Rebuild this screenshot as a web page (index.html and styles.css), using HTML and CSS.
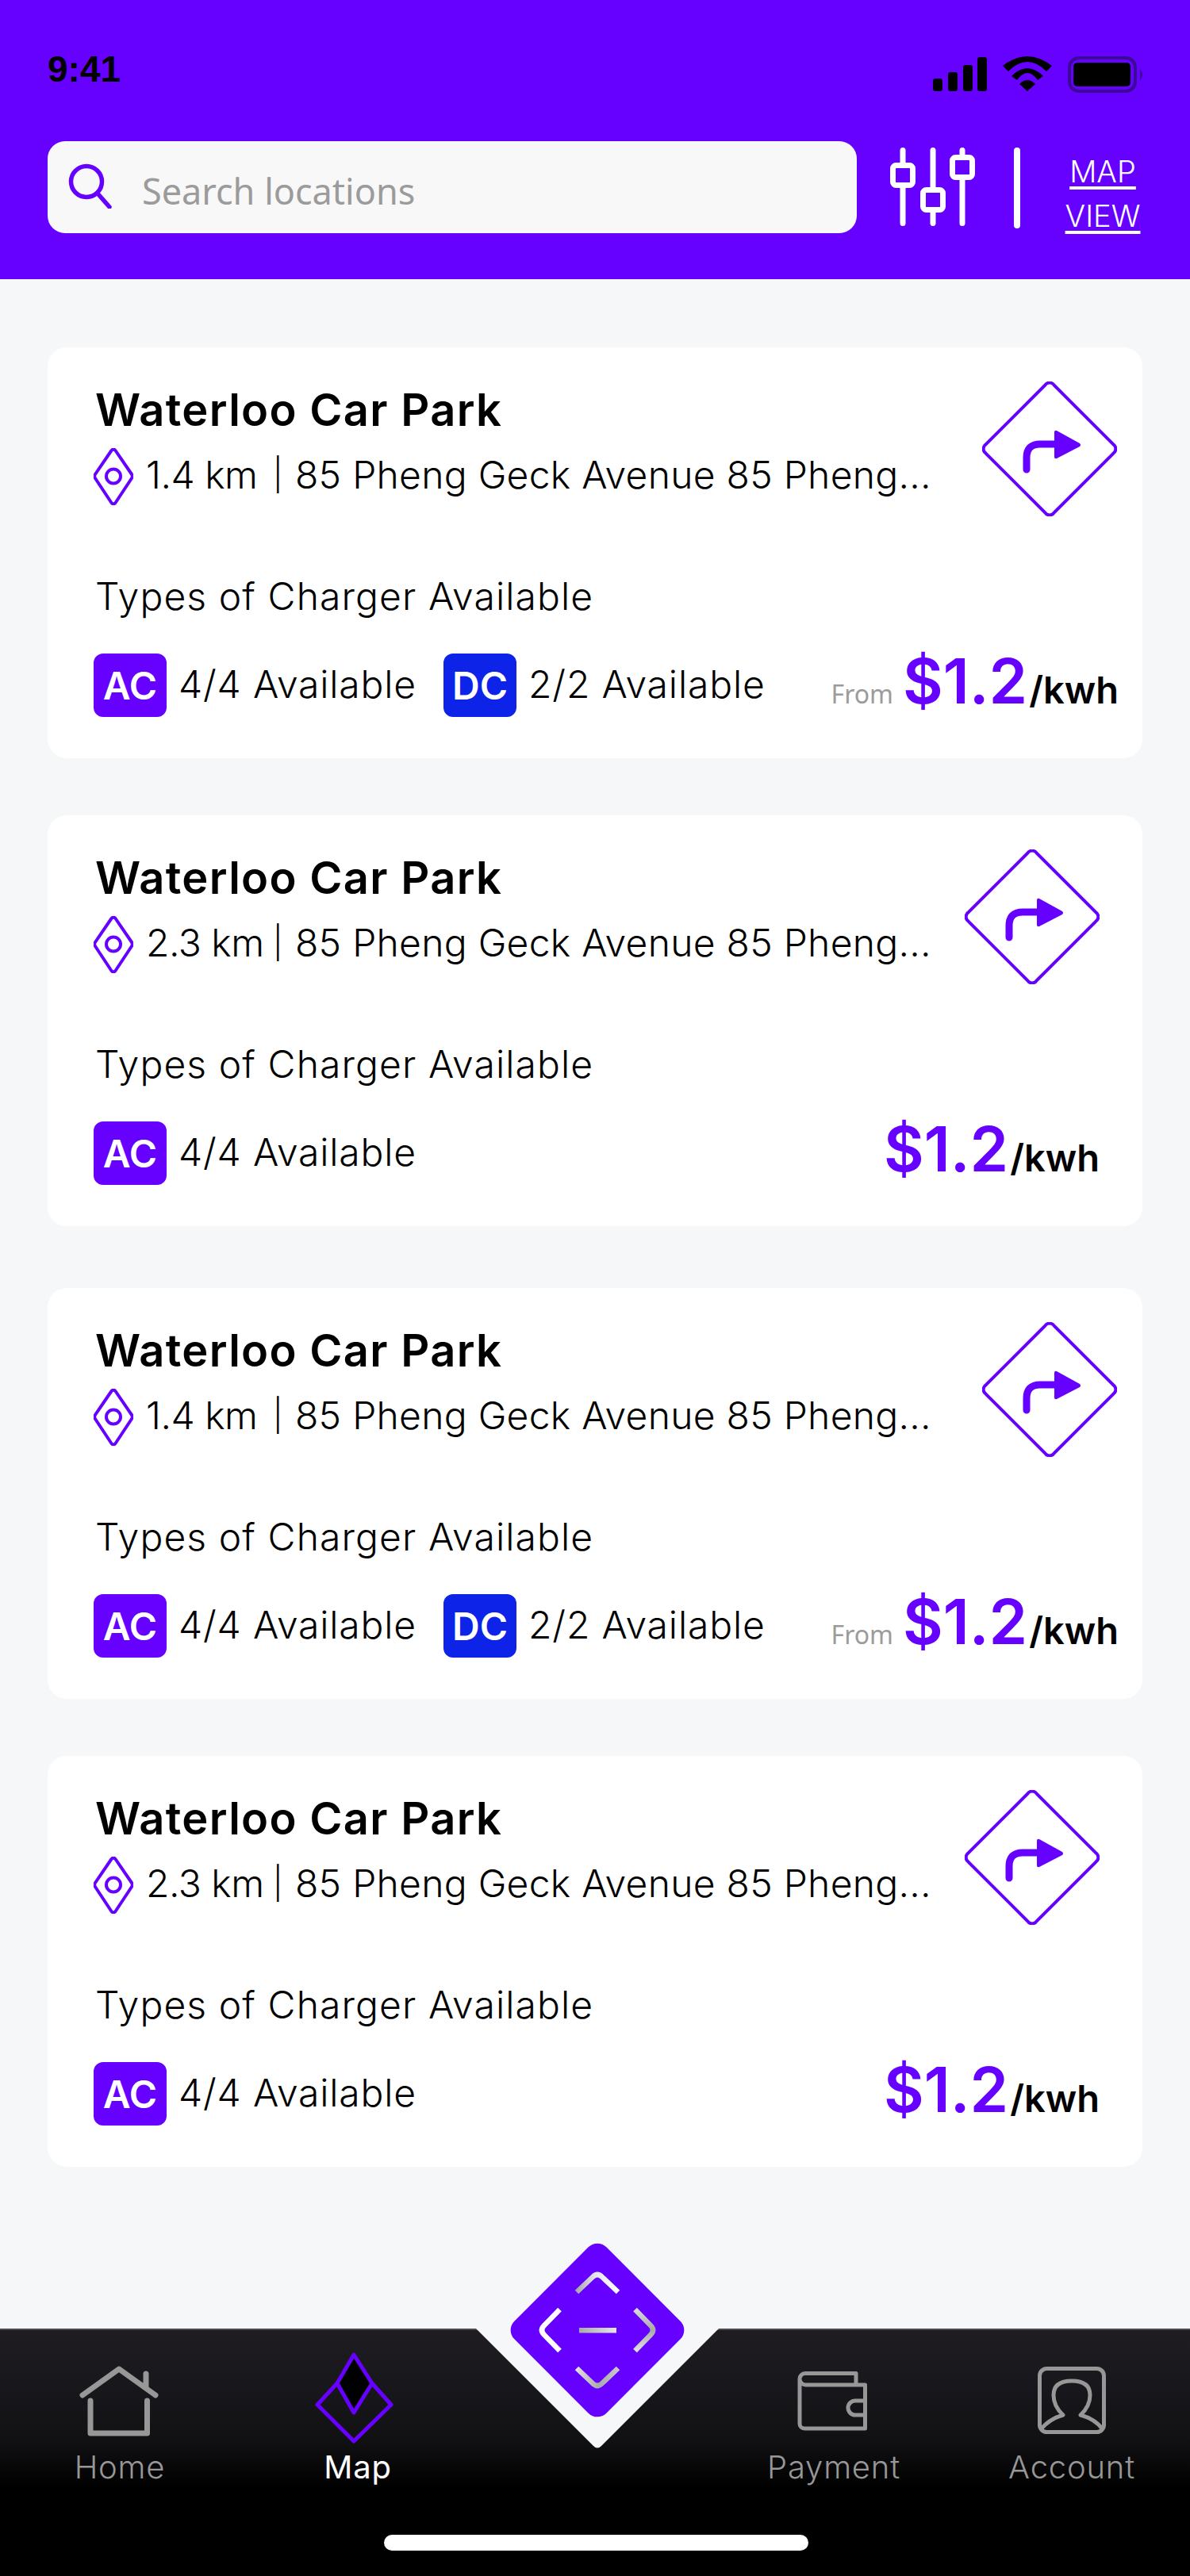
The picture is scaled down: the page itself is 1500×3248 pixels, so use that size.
FILE: index.html
```html
<!DOCTYPE html>
<html lang="en">
<head>
<meta charset="utf-8">
<title>Charging locations</title>
<link rel="stylesheet" href="styles.css">
</head>
<body>
<svg class="defs" width="0" height="0" aria-hidden="true">
  <symbol id="turn" viewBox="0 0 170 170">
    <path class="turn-frame" d="M79 5 a7 7 0 0 1 12 0 L165 79 a7 7 0 0 1 0 12 L91 165 a7 7 0 0 1 -12 0 L5 91 a7 7 0 0 1 0 -12 Z"/>
    <path class="turn-stem" d="M56 111 V96 Q56 79 73 79 H96"/>
    <path class="turn-head" d="M94 62 L123 78 Q125 80 123 82 L94 97 Q91 98 91 95 V64 Q91 61 94 62 Z"/>
  </symbol>
  <symbol id="pin" viewBox="0 0 50 72">
    <path class="pin-frame" d="M22.5 3 a3 3 0 0 1 5 0 L48 33 a4.5 4.5 0 0 1 0 5 L27.5 69 a3 3 0 0 1 -5 0 L2 38 a4.5 4.5 0 0 1 0 -5 Z"/>
    <circle class="pin-dot" cx="25" cy="35.5" r="9"/>
  </symbol>
</svg>

<div class="app">
  <header class="header">
    <div class="status">
      <span class="time">9:41</span>
      <div class="status-icons">
        <svg class="signal" viewBox="0 0 68 46"><rect x="0" y="28" width="12" height="16" rx="3"/><rect x="19" y="20" width="12" height="24" rx="3"/><rect x="38" y="11" width="12" height="33" rx="3"/><rect x="56" y="1" width="12" height="43" rx="3"/></svg>
        <svg class="wifi" viewBox="0 0 62 46"><path d="M0 12 Q31 -12 62 12 L55 19 Q31 -5 7 19 Z"/><path d="M11 25 Q31 5 51 25 L44 30 Q31 12 18 30 Z"/><path d="M21 35 Q31 25 41 35 L31 44 Z"/></svg>
        <svg class="battery" viewBox="0 0 97 46"><rect class="battery-shell" x="2" y="2" width="83" height="42" rx="12"/><rect x="7" y="8" width="72" height="30" rx="5"/><path class="battery-nub" d="M91 16 Q97 23 91 31 Z"/></svg>
      </div>
    </div>
    <div class="toolbar">
      <div class="search">
        <svg class="search-icon" viewBox="0 0 56 58"><circle cx="23" cy="24" r="19.5"/><path d="M38 40 L52 56"/></svg>
        <span class="search-text">Search locations</span>
      </div>
      <svg class="sliders" viewBox="0 0 107 99">
        <path d="M16 3.5 V95.5 M54 3.5 V95.5 M91 3.5 V95.5"/>
        <rect x="3.5" y="22.5" width="25" height="25" rx="4"/>
        <rect x="41.5" y="53.5" width="25" height="25" rx="4"/>
        <rect x="78.5" y="12.5" width="25" height="25" rx="4"/>
      </svg>
      <span class="divider"></span>
      <div class="view-link">
        <a>MAP</a>
        <a>VIEW</a>
      </div>
    </div>
  </header>

  <main class="list">
    <article class="card">
      <div class="card-top">
        <div class="card-info">
          <h2 class="title">Waterloo Car Park</h2>
          <div class="meta"><svg class="pin"><use href="#pin"/></svg><span class="dist">1.4 km</span><span class="sep">|</span><span class="addr">85 Pheng Geck Avenue 85 Pheng...</span></div>
        </div>
        <svg class="turn turn-far"><use href="#turn"/></svg>
      </div>
      <p class="types">Types of Charger Available</p>
      <div class="card-bottom">
        <span class="badge badge-ac">AC</span><span class="avail">4/4 Available</span>
        <span class="badge badge-dc">DC</span><span class="avail">2/2 Available</span>
        <div class="price price-far"><span class="from">From</span><span class="amount">$1.2</span><span class="unit">/kwh</span></div>
      </div>
    </article>

    <article class="card">
      <div class="card-top">
        <div class="card-info">
          <h2 class="title">Waterloo Car Park</h2>
          <div class="meta"><svg class="pin"><use href="#pin"/></svg><span class="dist">2.3 km</span><span class="sep">|</span><span class="addr">85 Pheng Geck Avenue 85 Pheng...</span></div>
        </div>
        <svg class="turn"><use href="#turn"/></svg>
      </div>
      <p class="types">Types of Charger Available</p>
      <div class="card-bottom">
        <span class="badge badge-ac">AC</span><span class="avail">4/4 Available</span>
        <div class="price"><span class="amount">$1.2</span><span class="unit">/kwh</span></div>
      </div>
    </article>

    <article class="card">
      <div class="card-top">
        <div class="card-info">
          <h2 class="title">Waterloo Car Park</h2>
          <div class="meta"><svg class="pin"><use href="#pin"/></svg><span class="dist">1.4 km</span><span class="sep">|</span><span class="addr">85 Pheng Geck Avenue 85 Pheng...</span></div>
        </div>
        <svg class="turn turn-far"><use href="#turn"/></svg>
      </div>
      <p class="types">Types of Charger Available</p>
      <div class="card-bottom">
        <span class="badge badge-ac">AC</span><span class="avail">4/4 Available</span>
        <span class="badge badge-dc">DC</span><span class="avail">2/2 Available</span>
        <div class="price price-far"><span class="from">From</span><span class="amount">$1.2</span><span class="unit">/kwh</span></div>
      </div>
    </article>

    <article class="card">
      <div class="card-top">
        <div class="card-info">
          <h2 class="title">Waterloo Car Park</h2>
          <div class="meta"><svg class="pin"><use href="#pin"/></svg><span class="dist">2.3 km</span><span class="sep">|</span><span class="addr">85 Pheng Geck Avenue 85 Pheng...</span></div>
        </div>
        <svg class="turn"><use href="#turn"/></svg>
      </div>
      <p class="types">Types of Charger Available</p>
      <div class="card-bottom">
        <span class="badge badge-ac">AC</span><span class="avail">4/4 Available</span>
        <div class="price"><span class="amount">$1.2</span><span class="unit">/kwh</span></div>
      </div>
    </article>
  </main>

  <nav class="tabbar">
    <div class="tab">
      <svg class="tab-icon" viewBox="0 0 120 120"><path class="tab-line" d="M14 58 L60 25 L106 58 M94 31 V48"/><path class="tab-line" d="M24 65 V106 H95.5 V65"/></svg>
      <span class="tab-label">Home</span>
    </div>
    <div class="tab tab-active">
      <svg class="tab-icon" viewBox="0 0 120 120"><path class="map-back" d="M35 43 L10 70 L56 116 L103 70 L79 43"/><path class="map-front" d="M56 7 L35 43 L56 80 L79 43 Z"/></svg>
      <span class="tab-label">Map</span>
    </div>
    <div class="tab tab-spacer"></div>
    <div class="tab">
      <svg class="tab-icon" viewBox="0 0 120 120"><path class="tab-thin" d="M18 38 V94 a6 6 0 0 0 6 6 H100.5 V45 H26 a7.5 7.5 0 0 1 -8 -7 a7 7 0 0 1 7 -7.5 H89 V45 M100.5 65 H88 a9 9 0 0 0 0 18 H100.5"/></svg>
      <span class="tab-label">Payment</span>
    </div>
    <div class="tab">
      <svg class="tab-icon" viewBox="0 0 120 120"><rect class="tab-thin" x="20.5" y="24.5" width="81" height="80" rx="9"/><path class="tab-thin" d="M23 100 Q33 88 50 83 Q38 72 38 58 Q38 40 61 40 Q84 40 84 58 Q84 72 72 83 Q90 88 99 100"/></svg>
      <span class="tab-label">Account</span>
    </div>
    <svg class="notch" viewBox="0 0 306 154"><path d="M0 0 H306 L158 148 Q153 153 148 148 Z"/></svg>
    <svg class="fab" viewBox="0 0 220 220" role="img" aria-label="Scan">
      <defs>
        <linearGradient id="fab-up" x1="0" x2="1" y1="0" y2="0"><stop offset="0" stop-color="#a9a9a9"/><stop offset="0.45" stop-color="#e6e6ea"/><stop offset="1" stop-color="#fff"/></linearGradient>
        <linearGradient id="fab-right" x1="0" x2="0" y1="0" y2="1"><stop offset="0" stop-color="#d8d8dc"/><stop offset="0.5" stop-color="#a9a9a9"/><stop offset="1" stop-color="#e0e0e4"/></linearGradient>
        <linearGradient id="fab-down" x1="0" x2="1" y1="0" y2="0"><stop offset="0" stop-color="#e0e0e4"/><stop offset="0.55" stop-color="#a9a9a9"/><stop offset="1" stop-color="#c9c9cd"/></linearGradient>
        <linearGradient id="fab-dash" x1="0" x2="1" y1="0" y2="0"><stop offset="0" stop-color="#a9a9a9"/><stop offset="1" stop-color="#e6e6ea"/></linearGradient>
      </defs>
      <rect class="fab-body" x="28" y="28" width="164" height="164" rx="16" transform="rotate(45 110 110)"/>
      <path class="fab-mark" stroke="#fff" d="M62.5 84 L43 104 Q37 110 43 116 L62.5 136"/>
      <path class="fab-mark" stroke="url(#fab-right)" d="M157.5 84 L177 104 Q183 110 177 116 L157.5 136"/>
      <path class="fab-mark" stroke="url(#fab-up)" d="M84 62 L104 43 Q110 37 116 43 L136 62"/>
      <path class="fab-mark" stroke="url(#fab-down)" d="M84 158 L104 177 Q110 183 116 177 L136 158"/>
      <rect class="fab-dash" x="87" y="107" width="47" height="6.5" fill="url(#fab-dash)"/>
    </svg>
    <span class="home-indicator"></span>
  </nav>
</div>
</body>
</html>
```

FILE: styles.css
```css
* { box-sizing: border-box; }
html, body { margin: 0; padding: 0; }
body { background: #f6f7f9; font-family: "Inter", "Liberation Sans", sans-serif; color: #000; }
.defs { position: absolute; }

.app { width: 1500px; height: 3248px; display: flex; flex-direction: column; overflow: hidden; }

/* header */
.header { height: 352px; flex: none; background: #6600ff; padding: 0 60px; }
.status { height: 178px; display: flex; justify-content: space-between; align-items: flex-start; padding-top: 60px; }
.time { font-family: "Liberation Sans", sans-serif; font-weight: 700; font-size: 46px; line-height: 54px; }
.status-icons { display: flex; align-items: flex-start; margin-right: -3px; padding-top: 11px; }
.signal { width: 68px; height: 46px; display: block; }
.wifi { width: 62px; height: 46px; display: block; margin-left: 20px; }
.battery { width: 97px; height: 46px; display: block; margin-left: 20px; }
.battery-shell { fill: none; stroke: #3c0a96; stroke-width: 4; }
.battery-nub { fill: #3c0a96; }

.toolbar { display: flex; align-items: flex-start; }
.search { width: 1020px; height: 116px; flex: none; background: #f8f8f8; border-radius: 22px; display: flex; align-items: center; padding-left: 26px; }
.search-icon { width: 56px; height: 58px; flex: none; fill: none; stroke: #6600ff; stroke-width: 5.5; stroke-linecap: round; display: block; margin-top: -4px; }
.search-text { font-family: "Noto Sans", sans-serif; font-size: 45px; color: #9b9b9b; margin: 10px 0 0 37px; line-height: 60px; }
.sliders { width: 107px; height: 99px; flex: none; margin: 8px 0 0 42px; display: block; }
.sliders path { stroke: #fff; stroke-width: 7; stroke-linecap: round; fill: none; }
.sliders rect { fill: #6600ff; stroke: #fff; stroke-width: 7; }
.divider { width: 8px; height: 102px; flex: none; background: #fff; border-radius: 4px; margin: 8px 0 0 49px; }
.view-link { display: flex; flex-direction: column; align-items: center; flex: none; margin: 10px 0 0 58px; width: 92px; }
.view-link a { color: #fff; font-size: 38px; font-weight: 300; line-height: 56px; text-decoration: underline; text-decoration-thickness: 4px; text-underline-offset: 5px; }

/* list */
.list { flex: 1; padding: 86px 60px 0; }
.card { height: 518px; background: #fff; border-radius: 24px; padding: 43px 32px 0 58px; margin-bottom: 72px; }
.card:nth-child(2) { margin-bottom: 78px; }
.card-top { display: flex; justify-content: space-between; height: 171px; }
.card-info { width: 1052px; flex: none; }
.title { margin: 2px 0 0 2px; font-size: 56px; line-height: 68px; font-weight: 600; letter-spacing: 1.3px; }
.meta { display: flex; align-items: center; height: 72px; margin-top: 14px; }
.pin { width: 50px; height: 72px; flex: none; display: block; }
.pin-frame, .pin-dot { fill: none; stroke: #6600ff; stroke-width: 4; }
.dist, .sep, .addr { font-size: 48px; font-weight: 300; line-height: 60px; margin-bottom: 4px; white-space: nowrap; }
.dist { width: 160px; flex: none; margin-left: 16px; letter-spacing: -0.5px; }
.sep { width: 28px; flex: none; font-size: 40px; }
.addr { letter-spacing: 0.27px; }
.turn { width: 170px; height: 170px; display: block; flex: none; margin-right: 22px; }
.turn-far { margin-right: 0; }
.turn-frame { fill: none; stroke: #6600ff; stroke-width: 4; }
.turn-stem { fill: none; stroke: #6600ff; stroke-width: 9; stroke-linecap: round; }
.turn-head { fill: #6600ff; }
.types { margin: 70px 0 0 2px; font-size: 48px; font-weight: 300; line-height: 60px; letter-spacing: 1.1px; }
.card-bottom { display: flex; align-items: center; margin-top: 42px; height: 80px; }
.badge { width: 92px; height: 80px; flex: none; border-radius: 12px; color: #fff; font-size: 48px; font-weight: 600; display: flex; align-items: center; justify-content: center; }
.badge-ac { background: #6600ff; }
.badge-dc { background: #0d24e8; margin-left: 34px; }
.avail { font-size: 48px; font-weight: 300; margin: 0 0 2px 15px; line-height: 60px; white-space: nowrap; letter-spacing: 0.85px; }
.price { align-self: flex-start; margin: -5px 22px 0 auto; display: flex; align-items: baseline; }
.price-far { margin-right: -2px; }
.from { font-family: "Noto Sans", sans-serif; font-size: 32px; color: #9b9b9b; margin-right: 12px; }
.amount { font-size: 78px; line-height: 80px; font-weight: 600; color: #6600ff; }
.unit { font-size: 47px; font-weight: 600; margin-left: 2px; }

/* tab bar */
.tabbar { position: relative; height: 312px; flex: none; display: grid; grid-template-columns: repeat(5, 300px); align-items: start; padding-top: 24px; background: linear-gradient(#1f1d22 0, #111114 140px, #000 200px); border-top: 2px solid #4a4a4e; }
.tab { display: flex; flex-direction: column; align-items: center; }
.tab-icon { width: 120px; height: 120px; display: block; }
.tab-label { font-size: 40px; font-weight: 300; line-height: 50px; color: #979797; margin: 4px 0 0 2px; letter-spacing: 0.8px; }
.tab-active .tab-label { color: #fff; font-weight: 400; }
.tab-line { fill: none; stroke: #979797; stroke-width: 7; stroke-linecap: round; stroke-linejoin: round; }
.tab-thin { fill: none; stroke: #979797; stroke-width: 5; stroke-linejoin: round; }
.map-back, .map-front { stroke: #6600ff; stroke-width: 5; stroke-linejoin: round; }
.map-back { fill: none; }
.map-front { fill: #000; }
.notch { position: absolute; left: 600px; top: -2px; width: 306px; height: 154px; display: block; fill: #f6f7f9; }
.fab { position: absolute; left: 642.5px; top: -110.5px; width: 220px; height: 220px; display: block; }
.fab-body { fill: #6600ff; }
.fab-mark { fill: none; stroke-width: 6.5; }
.home-indicator { position: absolute; left: 484px; top: 258px; width: 535px; height: 20px; background: #fff; border-radius: 10px; }
```
